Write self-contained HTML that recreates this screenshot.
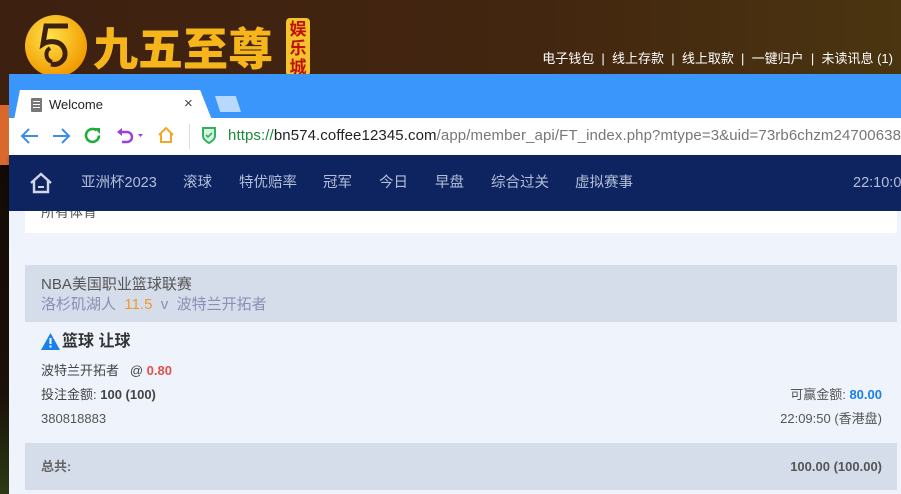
<!DOCTYPE html>
<html><head><meta charset="utf-8"><style>
*{margin:0;padding:0;box-sizing:border-box}
body{width:901px;height:494px;overflow:hidden;position:relative;font-family:"Liberation Sans","Noto Sans CJK SC",sans-serif;background:linear-gradient(90deg,#3e2011,#43260f 60%,#4a3510);}
.abs{position:absolute}
.n{position:absolute;top:172px;font-size:14.5px;color:#b4bed6;line-height:22px;white-space:nowrap}
</style></head><body>
<div class="abs" style="left:0;top:105px;width:9px;height:60px;background:#d9682b"></div>
<div class="abs" style="left:0;top:165px;width:9px;height:329px;background:linear-gradient(#120a05,#1a1208 70%,#2c3a14)"></div>
<svg class="abs" style="left:24px;top:14px" width="64" height="64" viewBox="0 0 64 64">
<defs><radialGradient id="g" cx="40%" cy="35%" r="65%"><stop offset="0" stop-color="#ffe24a"/><stop offset="1" stop-color="#f29a00"/></radialGradient></defs>
<circle cx="32" cy="32" r="31" fill="url(#g)"/>
<path d="M44 12H22l-3 18c6-4 20-4 22 8 1 8-6 14-14 12" fill="none" stroke="#3e2011" stroke-width="5"/>
<path d="M28 48c-6-2-8-10-2-14" fill="none" stroke="#3e2011" stroke-width="4"/>
</svg>
<div class="abs" style="left:93px;top:18px;font-size:45px;font-weight:900;color:#f7b51c;letter-spacing:0;font-family:'Noto Sans CJK SC',sans-serif;line-height:56px;white-space:nowrap">九五至尊</div>
<div class="abs" style="left:286px;top:18px;width:24px;height:58px;background:#f5c32a;border-radius:4px;color:#c01010;font-size:17px;font-weight:bold;line-height:19px;text-align:center;font-family:'Noto Sans CJK SC',sans-serif;overflow:hidden">娱<br>乐<br>城</div>
<div class="abs" style="right:8px;top:50px;color:#fff;font-size:13px;white-space:nowrap;line-height:18px">电子钱包 &nbsp;| &nbsp;线上存款 &nbsp;| &nbsp;线上取款 &nbsp;| &nbsp;一键归户 &nbsp;| &nbsp;未读讯息 (1)</div>
<div class="abs" style="left:9px;top:74px;width:892px;height:420px;background:#3a96fb"></div>
<div class="abs" style="left:14px;top:90px;width:198px;height:30px;background:#fff;border-radius:6px 6px 0 0;clip-path:polygon(0 100%,3% 0,94% 0,100% 100%)"></div>
<div class="abs" style="left:31px;top:98px;width:11px;height:14px;background:#777;border-radius:1px"></div>
<div class="abs" style="left:33px;top:101px;width:7px;height:1px;background:#fff;box-shadow:0 3px #fff,0 6px #fff"></div>
<div class="abs" style="left:49px;top:97px;font-size:13px;color:#222">Welcome</div>
<div class="abs" style="left:184px;top:95px;font-size:15px;color:#444">×</div>
<div class="abs" style="left:215px;top:96px;width:26px;height:16px;background:#b9d8fd;clip-path:polygon(0 0,80% 0,100% 100%,20% 100%)"></div>
<div class="abs" style="left:9px;top:118px;width:892px;height:37px;background:#fff"></div>
<svg class="abs" style="left:20px;top:127px" width="20" height="18" viewBox="0 0 20 18"><path d="M18 9H3M9 2L2 9l7 7" fill="none" stroke="#3a8ee8" stroke-width="2"/></svg>
<svg class="abs" style="left:51px;top:127px" width="20" height="18" viewBox="0 0 20 18"><path d="M2 9h15M11 2l7 7-7 7" fill="none" stroke="#3a8ee8" stroke-width="2"/></svg>
<svg class="abs" style="left:83px;top:126px" width="19" height="19" viewBox="0 0 19 19"><path d="M16 9.5A6.5 6.5 0 1 1 13.5 4.3" fill="none" stroke="#1eae3a" stroke-width="2.6"/><path d="M11 2h6v6z" fill="#1eae3a"/></svg>
<svg class="abs" style="left:115px;top:126px" width="30" height="19" viewBox="0 0 30 19"><path d="M6 6h6a5 5 0 0 1 0 10H7" fill="none" stroke="#9b3fe0" stroke-width="2.4"/><path d="M2 6l5-4v8z" fill="#9b3fe0"/><path d="M23 8h5l-2.5 3z" fill="#9b3fe0"/></svg>
<svg class="abs" style="left:157px;top:126px" width="18" height="18" viewBox="0 0 18 18"><path d="M2 9L9 2l7 7M4 7v9h10V7" fill="none" stroke="#f5a623" stroke-width="2"/></svg>
<div class="abs" style="left:189px;top:124px;width:1px;height:25px;background:#ddd"></div>
<svg class="abs" style="left:201px;top:126px" width="16" height="18" viewBox="0 0 16 18"><path d="M2 2h12v8c0 4-6 7-6 7s-6-3-6-7z" fill="#dff3e4" stroke="#2db55d" stroke-width="2"/><path d="M5 9l2 2 4-4" fill="none" stroke="#2db55d" stroke-width="1.6"/></svg>
<div class="abs" style="left:228px;top:127px;font-size:15px;color:#777;white-space:nowrap;line-height:18px;letter-spacing:0.1px"><span style="color:#1e8a3a">https://</span><span style="color:#222">bn574.coffee12345.com</span>/app/member_api/FT_index.php?mtype=3&amp;uid=73rb6chzm24700638</div>
<div class="abs" style="left:9px;top:155px;width:892px;height:56px;background:#0d2461;box-shadow:0 2px 3px rgba(0,0,0,.3)"></div>
<svg class="abs" style="left:29px;top:171px" width="24" height="24" viewBox="0 0 24 24"><path d="M2 12L12 3l10 9M5 10v11h14V10" fill="none" stroke="#d0d6e6" stroke-width="2.4"/><path d="M9 16h6" stroke="#d0d6e6" stroke-width="2"/></svg>
<div class="n" style="left:81px">亚洲杯2023</div>
<div class="n" style="left:183px">滚球</div>
<div class="n" style="left:239px">特优赔率</div>
<div class="n" style="left:323px">冠军</div>
<div class="n" style="left:379px">今日</div>
<div class="n" style="left:435px">早盘</div>
<div class="n" style="left:491px">综合过关</div>
<div class="n" style="left:575px">虚拟赛事</div>
<div class="n" style="left:853px">22:10:0</div>
<div class="abs" style="left:9px;top:211px;width:892px;height:283px;background:#eef3fc"></div>
<div class="abs" style="left:25px;top:211px;width:872px;height:22px;background:#fff;overflow:hidden"><div style="position:absolute;left:16px;top:-9px;font-size:14px;color:#555">所有体育</div></div>
<div class="abs" style="left:25px;top:265px;width:872px;height:57px;background:#d5dcea"></div>
<div class="abs" style="left:41px;top:275px;font-size:15px;color:#555;line-height:20px">NBA美国职业篮球联赛</div>
<div class="abs" style="left:41px;top:295px;font-size:15px;color:#8a90b5;line-height:20px;white-space:nowrap">洛杉矶湖人 &nbsp;<span style="color:#ef9a2c">11.5</span> &nbsp;v &nbsp;波特兰开拓者</div>
<svg class="abs" style="left:41px;top:333px" width="19" height="17" viewBox="0 0 19 17"><path d="M9.5 0L19 17H0z" fill="#1a7fe8"/><rect x="8.5" y="5" width="2" height="6" fill="#fff"/><rect x="8.5" y="12.5" width="2" height="2" fill="#fff"/></svg>
<div class="abs" style="left:62px;top:332px;font-size:16px;font-weight:bold;color:#333;line-height:20px">篮球 让球</div>
<div class="abs" style="left:41px;top:363px;font-size:13px;color:#444;line-height:16px">波特兰开拓者 &nbsp;&nbsp;@ <b style="color:#e0514b">0.80</b></div>
<div class="abs" style="left:41px;top:387px;font-size:13px;color:#444;line-height:16px">投注金额: <b>100 (100)</b></div>
<div class="abs" style="left:41px;top:411px;font-size:13px;color:#555;line-height:16px">380818883</div>
<div class="abs" style="right:19px;top:387px;font-size:13px;color:#555;line-height:16px">可赢金额: <b style="color:#1a7fe8">80.00</b></div>
<div class="abs" style="right:19px;top:411px;font-size:13px;color:#555;line-height:16px">22:09:50 (香港盘)</div>
<div class="abs" style="left:25px;top:443px;width:872px;height:47px;background:#d5dcea"></div>
<div class="abs" style="left:41px;top:459px;font-size:13px;color:#666;font-weight:bold;line-height:16px">总共:</div>
<div class="abs" style="right:19px;top:459px;font-size:13px;color:#555;font-weight:bold;line-height:16px">100.00 (100.00)</div>
</body></html>
